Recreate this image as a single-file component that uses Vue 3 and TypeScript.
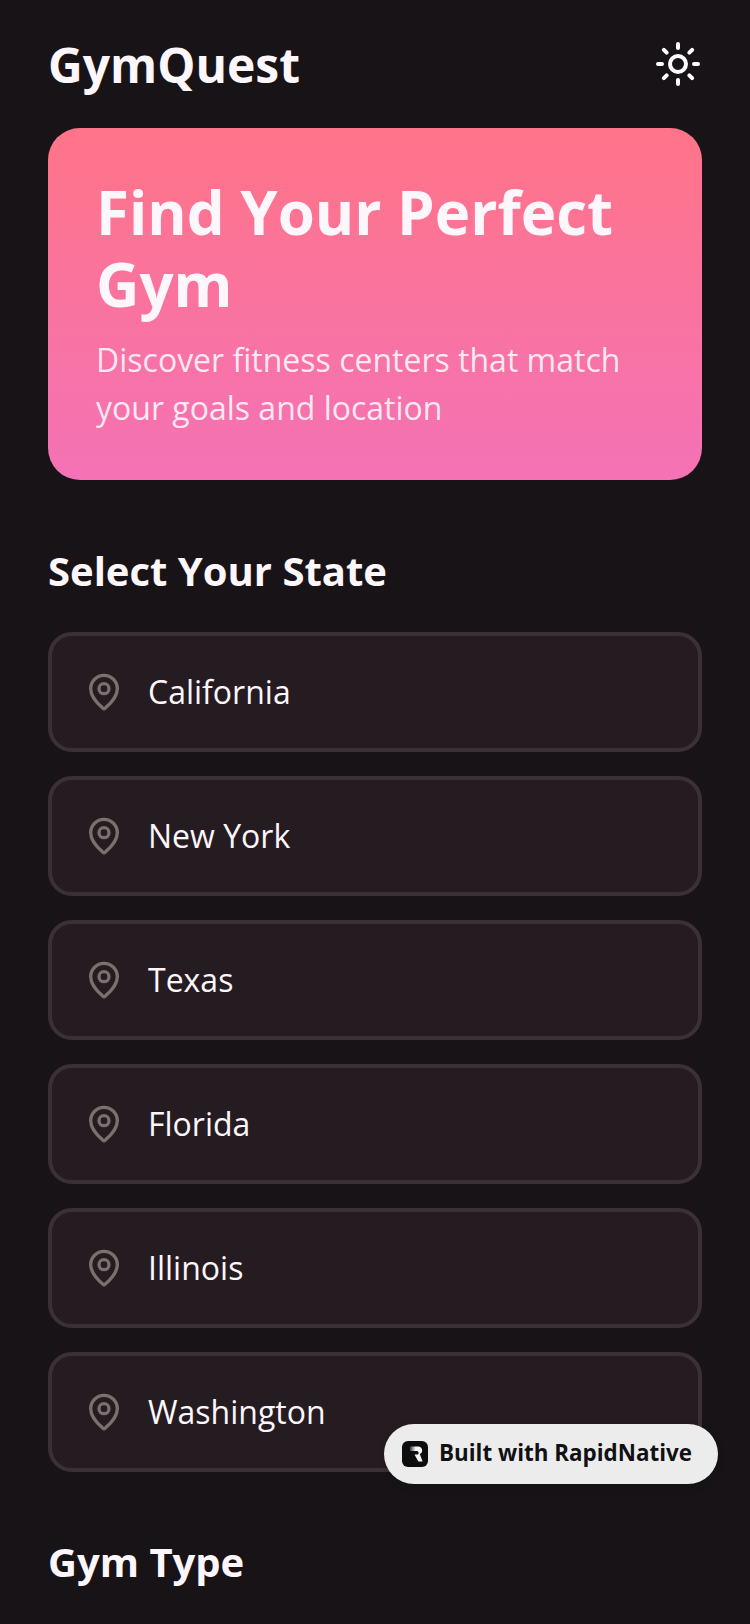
<template>
  <div class="screen">
    <header class="top-bar">
      <h1 class="brand">GymQuest</h1>
      <svg class="sun" viewBox="0 0 24 24" fill="none" stroke="currentColor" stroke-width="2" stroke-linecap="round" stroke-linejoin="round">
        <circle cx="12" cy="12" r="4" />
        <path d="M12 2v2M12 20v2M4.93 4.93l1.41 1.41M17.66 17.66l1.41 1.41M2 12h2M20 12h2M6.34 17.66l-1.41 1.41M19.07 4.93l-1.41 1.41" />
      </svg>
    </header>

    <section class="hero">
      <h2 class="hero-title">Find Your Perfect Gym</h2>
      <p class="hero-sub">Discover fitness centers that match your goals and location</p>
    </section>

    <h3 class="section-title">Select Your State</h3>
    <div class="state-list">
      <div v-for="state in states" :key="state" class="state-row">
        <svg class="pin" viewBox="0 0 24 24" fill="none" stroke="currentColor" stroke-width="2" stroke-linecap="round" stroke-linejoin="round">
          <path d="M20 10c0 4.993-5.539 10.193-7.399 11.799a1 1 0 0 1-1.202 0C9.539 20.193 4 14.993 4 10a8 8 0 0 1 16 0" />
          <circle cx="12" cy="10" r="3" />
        </svg>
        <span class="state-name">{{ state }}</span>
      </div>
    </div>

    <h3 class="section-title type-title">Gym Type</h3>

    <div class="built-badge">
      <svg class="badge-logo" viewBox="0 0 26 26">
        <defs>
          <linearGradient id="logoFade" x1="0" y1="0" x2="1" y2="0">
            <stop offset="0" stop-color="#3a3a3a" />
            <stop offset="0.45" stop-color="#f6f6f6" />
          </linearGradient>
        </defs>
        <rect width="26" height="26" rx="6" fill="#0d0c0e" />
        <path d="M8 5.5h8c2.7 0 4.2 1.7 4.2 4 0 1.8-1 3-2.4 3.6l2.8 7.4h-4.2l-4-6.9h2.7c.9 0 1.5-.6 1.5-1.6S16 9.9 15.1 9.9H8z" fill="url(#logoFade)" />
      </svg>
      <span class="badge-text">Built with RapidNative</span>
    </div>
  </div>
</template>

<script setup lang="ts">
const states: string[] = ['California', 'New York', 'Texas', 'Florida', 'Illinois', 'Washington']
</script>

<style>
html,
body {
  margin: 0;
  background: #181317;
}
</style>

<style scoped>
.screen {
  position: relative;
  width: 750px;
  height: 1624px;
  overflow: hidden;
  box-sizing: border-box;
  padding: 32px 48px 0;
  background: #181317;
  color: #fdf6fb;
  font-family: "Open Sans", "Noto Sans", sans-serif;
}

.top-bar {
  display: flex;
  align-items: center;
  justify-content: space-between;
  height: 64px;
}

.brand {
  margin: 2px 0 0;
  font-size: 48px;
  line-height: 64px;
  font-weight: 700;
}

.sun {
  width: 48px;
  height: 48px;
  color: #fff;
}

.hero {
  margin-top: 32px;
  height: 352px;
  box-sizing: border-box;
  padding: 48px;
  border-radius: 32px;
  background: linear-gradient(180deg, #ff7488 0%, #f472b6 100%);
}

.hero-title {
  margin: 0;
  font-size: 60px;
  line-height: 72px;
  font-weight: 700;
}

.hero-sub {
  margin: 16px 0 0;
  font-size: 32px;
  line-height: 48px;
  color: rgba(255, 255, 255, 0.85);
}

.section-title {
  margin: 63px 0 33px;
  font-size: 40px;
  line-height: 56px;
  font-weight: 700;
}

.state-list {
  display: flex;
  flex-direction: column;
  gap: 24px;
}

.state-row {
  display: flex;
  align-items: center;
  gap: 24px;
  height: 120px;
  box-sizing: border-box;
  padding: 0 32px;
  border: 4px solid #3b3037;
  border-radius: 24px;
  background: #251c21;
}

.pin {
  width: 40px;
  height: 40px;
  flex: none;
  color: #78716c;
}

.state-name {
  font-size: 32px;
  line-height: 48px;
}

.type-title {
  margin-top: 62px;
}

.built-badge {
  position: absolute;
  left: 384px;
  top: 1424px;
  display: flex;
  align-items: center;
  gap: 11px;
  width: 334px;
  height: 60px;
  box-sizing: border-box;
  padding-left: 18px;
  border-radius: 30px;
  background: #ececec;
  box-shadow: 0 2px 8px rgba(0, 0, 0, 0.15);
}

.badge-logo {
  width: 26px;
  height: 26px;
  flex: none;
}

.badge-text {
  margin-top: -2px;
  font-size: 22.4px;
  line-height: 30px;
  font-weight: 700;
  color: #111014;
}
</style>
